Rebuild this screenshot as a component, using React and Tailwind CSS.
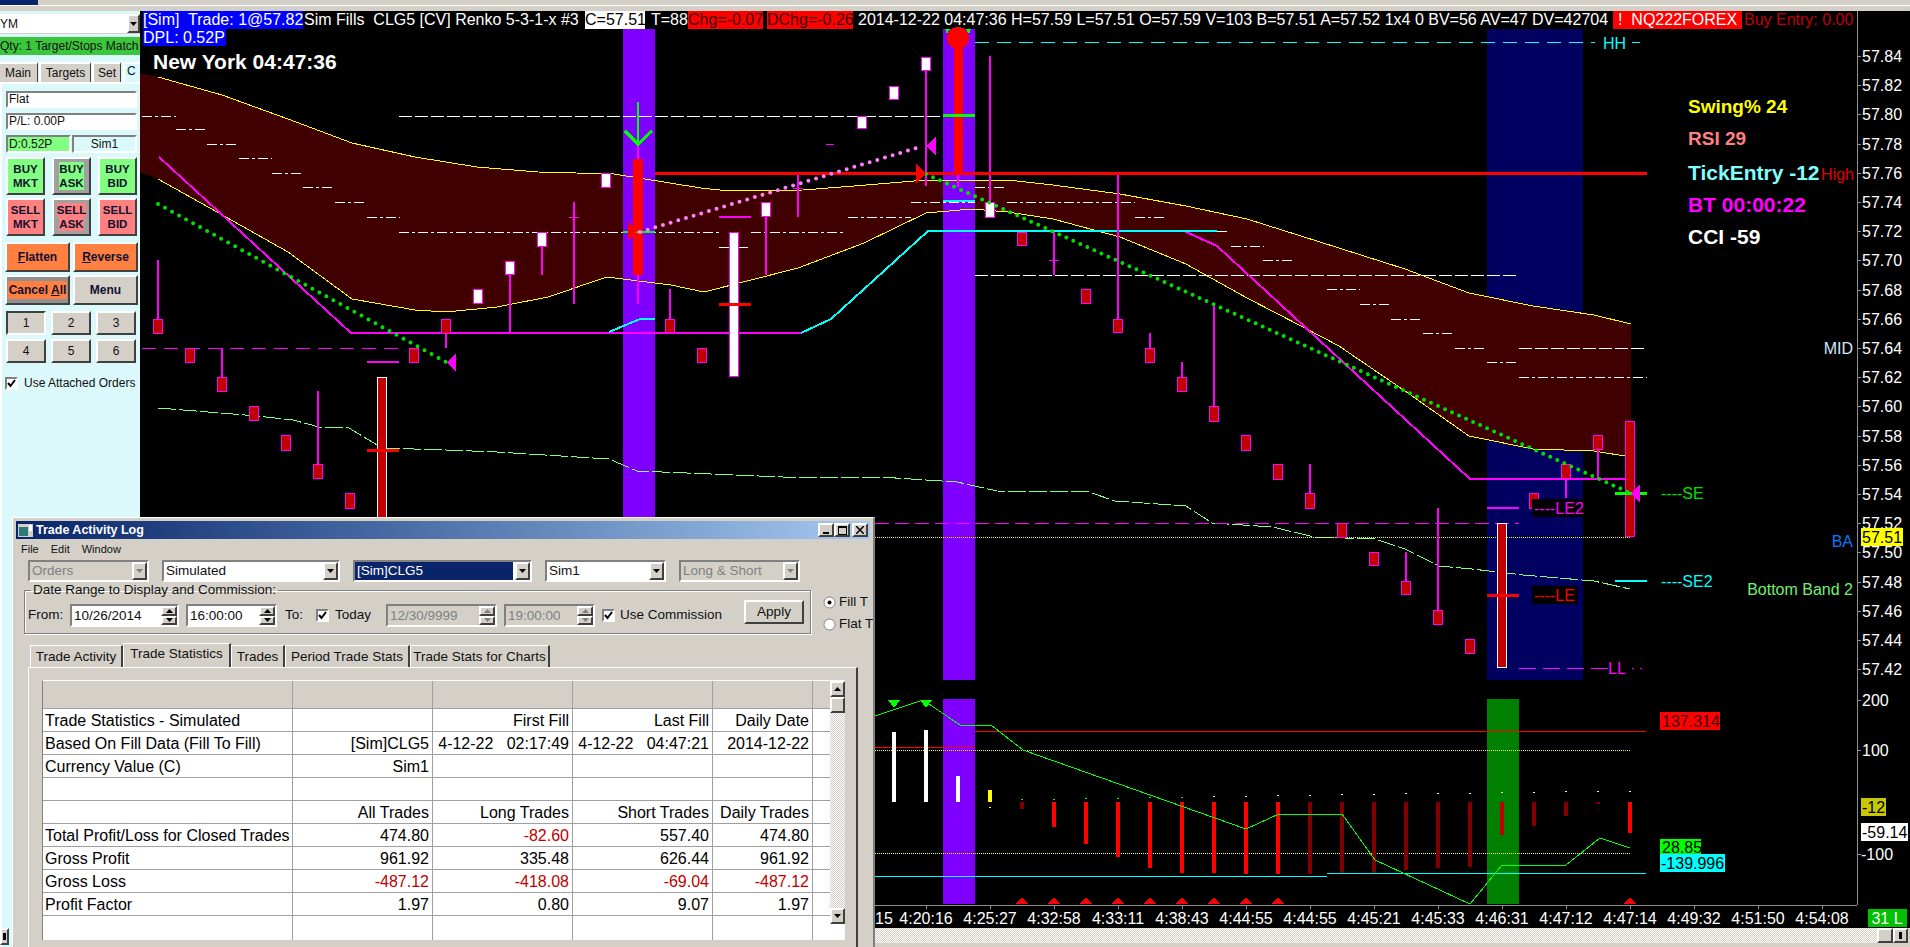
import React from "react";

const raised = "border-2 border-t-white border-l-white border-r-[#404040] border-b-[#404040]";
const sunken = "border-2 border-t-[#808080] border-l-[#808080] border-r-white border-b-white";

const prices = ["57.84","57.82","57.80","57.78","57.76","57.74","57.72","57.70","57.68","57.66","57.64","57.62","57.60","57.58","57.56","57.54","57.52","57.50","57.48","57.46","57.44","57.42"];
const times = ["4:20:16","4:25:27","4:32:58","4:33:11","4:38:43","4:44:55","4:44:55","4:45:21","4:45:33","4:46:31","4:47:12","4:47:14","4:49:32","4:51:50","4:54:08"];

const upper = [[140,73],[158,77],[222,95],[288,119],[352,143],[415,157],[477,167],[538,172],[614,174],[701,188],[729,191],[803,190],[854,186],[926,180],[1008,180],[1053,185],[1120,194],[1186,206],[1247,219],[1339,248],[1405,269],[1469,293],[1533,306],[1594,315],[1631,324]];
const lower = [[140,172],[158,179],[217,212],[288,252],[352,299],[415,310],[446,312],[497,307],[548,297],[607,277],[671,285],[704,292],[798,268],[864,243],[926,213],[972,209],[1008,212],[1053,219],[1120,237],[1186,264],[1247,298],[1303,327],[1339,346],[1405,391],[1469,436],[1533,449],[1594,451],[1631,457]];
const bandGreen = [[158,408],[196,411],[257,416],[293,420],[319,427],[349,428],[382,448],[446,450],[497,452],[609,459],[637,471],[711,474],[783,477],[880,477],[957,482],[997,491],[1089,492],[1115,501],[1186,506],[1212,523],[1273,527],[1314,537],[1375,539],[1405,549],[1439,566],[1472,569],[1523,575],[1594,581],[1630,589]];
const oscLine = [[875,716],[923,700],[960,725],[991,725],[1023,750],[1246,829],[1279,814],[1342,814],[1375,860],[1470,904],[1502,865],[1566,865],[1600,838],[1630,848]];

const pts = (a) => a.map((p) => p.join(",")).join(" ");

// x, top, bottom, wickTop, wickBottom, kind
const candles = [
  [158,319,334,260,334,"r"],[190,348,363,0,0,"r"],[222,377,392,348,377,"r"],[254,406,421,0,0,"r"],
  [286,435,451,0,0,"r"],[318,464,479,391,464,"r"],[350,493,509,0,0,"r"],[382,377,520,0,0,"rw"],
  [414,348,363,0,0,"r"],[446,319,334,334,348,"r"],[478,289,304,0,0,"w"],[510,261,275,275,333,"w"],
  [542,232,247,247,275,"w"],[606,173,188,0,0,"w"],[670,319,333,289,319,"r"],[702,348,363,0,0,"r"],
  [734,232,377,0,0,"w"],[766,202,217,217,275,"w"],[862,116,129,0,0,"w"],[894,86,100,0,0,"w"],
  [926,57,71,71,186,"w"],[990,202,218,56,202,"w"],[1022,232,246,0,0,"r"],[1086,289,304,0,0,"r"],
  [1118,319,333,174,319,"r"],[1150,348,363,333,348,"r"],[1182,377,392,362,377,"r"],[1214,406,422,304,406,"r"],
  [1246,435,451,0,0,"r"],[1278,464,480,0,0,"r"],[1310,493,509,464,493,"r"],[1342,523,538,0,0,"r"],
  [1374,552,566,0,0,"r"],[1406,581,595,552,581,"r"],[1438,610,625,508,610,"r"],[1470,639,654,0,0,"r"],
  [1502,523,668,0,0,"rw"],[1534,493,509,0,0,"r"],[1566,464,479,479,498,"r"],[1598,435,450,450,479,"r"],
  [1630,421,537,0,0,"r"],
];

const dd = "10 3 3 3";
const ld = "13 3";
const whiteSegs = [
  [142,176,116,dd],[176,207,129,dd],[207,239,144,dd],[239,272,158,dd],[272,304,173,dd],[303,335,187,dd],[335,366,202,dd],[367,400,217,dd],
  [399,719,232,dd],[751,844,232,dd],[399,975,116,ld],[719,751,247,dd],[848,911,217,dd],[911,975,202,dd],[1007,1135,202,dd],[975,1007,187,dd],
  [1135,1167,217,dd],[1217,1230,231,dd],[1231,1264,246,dd],[1263,1295,260,dd],[975,1519,275,ld],[1327,1360,289,dd],[1360,1391,304,dd],
  [1391,1423,319,dd],[1423,1455,333,dd],[1455,1487,348,dd],[1487,1519,362,dd],[1519,1647,348,ld],[1519,1647,377,dd],
];

// x, bottom, colour
const oscBars = [
  [1022,809,"#800000"],[1054,827,"#ff0000"],[1086,844,"#ff0000"],[1118,857,"#ff0000"],[1150,868,"#ff0000"],[1182,873,"#ff0000"],[1214,873,"#ff0000"],
  [1246,874,"#ff0000"],[1278,874,"#ff0000"],[1310,874,"#800000"],[1342,873,"#800000"],[1374,873,"#800000"],[1406,870,"#800000"],[1438,868,"#800000"],
  [1470,867,"#800000"],[1502,835,"#c00000"],[1534,826,"#800000"],[1566,816,"#800000"],[1598,804,"#800000"],[1630,833,"#ff0000"],
];

const T = ({ x, y, fill = "#fff", size = 16, bold, anchor, children }) => (
  <text x={x} y={y} fill={fill} fontSize={size} fontWeight={bold ? 700 : 400} textAnchor={anchor} dominantBaseline="central">
    {children}
  </text>
);

const HLine = ({ x1, x2, y, c, w = 1, dash }) => (
  <line x1={x1} x2={x2} y1={y} y2={y} stroke={c} strokeWidth={w} strokeDasharray={dash} />
);

const Chart = () => (
  <svg width="1770" height="917" viewBox="140 11 1770 917" className="block bg-black" shapeRendering="crispEdges">
    {/* session bands */}
    <rect x="1487" y="29" width="96" height="651" fill="#000060" />
    <polygon points={pts([...upper, ...[...lower].reverse()])} fill="#400000" />
    <rect x="623" y="29" width="32" height="500" fill="#8000ff" />
    <rect x="943" y="29" width="32" height="651" fill="#8000ff" />

    <polyline points={pts(upper.slice(1))} fill="none" stroke="#ffff00" strokeWidth="1" />
    <polyline points={pts(lower.slice(1))} fill="none" stroke="#ffff00" strokeWidth="1" />
    <polyline points={pts(bandGreen)} fill="none" stroke="#80ff80" strokeWidth="1" strokeDasharray="18 3" />

    {whiteSegs.map((s, i) => (
      <HLine key={i} x1={s[0]} x2={s[1]} y={s[2]} c="#fff" dash={s[3]} />
    ))}
    <HLine x1={142} x2={400} y={348} c="#ff00ff" dash="14 8" />
    <HLine x1={875} x2={1519} y={523} c="#ff00ff" dash="14 6" />
    <HLine x1={875} x2={1630} y={537} c="#ffff00" dash="1 1" />
    <HLine x1={975} x2={1595} y={42} c="#00ffff" dash="14 8" />
    <HLine x1={1632} x2={1640} y={42} c="#00ffff" />

    {/* trail lines */}
    <polyline points="159,157 351,333 801,333" fill="none" stroke="#ff00ff" strokeWidth="2" />
    <polyline points="1184,231 1217,246 1470,479 1632,479" fill="none" stroke="#ff00ff" strokeWidth="2" />
    <polyline points="609,332 640,319 655,319" fill="none" stroke="#00ffff" strokeWidth="2" />
    <polyline points="801,333 831,319 928,231 1217,231" fill="none" stroke="#00ffff" strokeWidth="2" />
    <HLine x1={943} x2={975} y={201} c="#00ffff" w={2} />

    {/* candles */}
    {candles.map(([x, t, b, wt, wb, k], i) => (
      <g key={i}>
        {wb > 0 && <rect x={x - 1} y={wt} width="2" height={wb - wt} fill="#ff00ff" />}
        <rect x={x - 4.5} y={t + 0.5} width="9" height={b - t - 1} fill={k === "w" ? "#fff" : "#c00000"} stroke={k === "rw" ? "#fff" : "#ff00ff"} strokeWidth="1" />
      </g>
    ))}
    <rect x="573" y="202" width="2" height="102" fill="#ff00ff" />
    <rect x="569" y="217" width="10" height="1" fill="#ff00ff" />
    <rect x="797" y="175" width="2" height="42" fill="#ff00ff" />
    <rect x="793" y="188" width="10" height="1" fill="#ff00ff" />
    <rect x="1053" y="232" width="2" height="43" fill="#ff00ff" />
    <rect x="1049" y="260" width="10" height="1" fill="#ff00ff" />
    <rect x="826" y="144" width="8" height="1" fill="#ff00ff" />

    {/* signal bars */}
    <rect x="637" y="144" width="2" height="160" fill="#ff00ff" />
    <rect x="633" y="159" width="10" height="116" fill="#ff0000" />
    <rect x="957" y="173" width="2" height="14" fill="#ff00ff" />
    <rect x="954" y="40" width="9" height="133" fill="#ff0000" />
    <circle cx="958" cy="38" r="11" fill="#ff0000" />
    <polygon points="945,29 950,29 947,34" fill="#00ff00" />
    <polygon points="966,29 971,29 969,34" fill="#00ff00" />
    <HLine x1={943} x2={975} y={115} c="#00ff00" w={3} />
    <HLine x1={623} x2={655} y={232} c="#00ff00" w={2} />
    <polyline points="638,102 638,144" fill="none" stroke="#00ff00" strokeWidth="2" />
    <polyline points="625,131 638,144 652,131" fill="none" stroke="#00ff00" strokeWidth="3" />

    <HLine x1={367} x2={399} y={362} c="#ff00ff" w={2} />
    <HLine x1={719} x2={751} y={217} c="#ff00ff" w={2} />
    <HLine x1={367} x2={399} y={450} c="#ff0000" w={3} />
    <HLine x1={719} x2={751} y={304} c="#ff0000" w={3} />
    <HLine x1={1487} x2={1519} y={508} c="#ff00ff" w={2} />
    <HLine x1={1487} x2={1519} y={595} c="#ff0000" w={3} />
    <HLine x1={655} x2={1647} y={173} c="#ff0000" w={3} />
    <HLine x1={1615} x2={1647} y={493} c="#00ff00" w={3} />
    <HLine x1={1615} x2={1647} y={581} c="#00ffff" w={2} />
    <HLine x1={1519} x2={1608} y={668} c="#ff00ff" dash="17 7" />
    <HLine x1={1632} x2={1647} y={668} c="#ff00ff" dash="2 6" />

    {/* dotted trend lines */}
    <g shapeRendering="auto">
      <line x1="158" y1="204" x2="446" y2="362" stroke="#00e000" strokeWidth="4" strokeLinecap="round" strokeDasharray="0 8" />
      <line x1="926" y1="174" x2="1630" y2="493" stroke="#00e000" strokeWidth="4" strokeLinecap="round" strokeDasharray="0 7.7" />
      <line x1="640" y1="232" x2="923" y2="146" stroke="#ff80ff" strokeWidth="4" strokeLinecap="round" strokeDasharray="0 8" />
    </g>
    <polygon points="447,362 456,353 456,372" fill="#ff00ff" />
    <polygon points="926,146 936,137 936,155" fill="#ff00ff" />
    <polygon points="1631,493 1640,484 1640,503" fill="#ff00ff" />
    <polygon points="628,222 628,240 638,231" fill="#ff0000" />
    <polygon points="916,164 916,183 926,173" fill="#ff0000" />

    {/* chart labels */}
    <T x={153} y={61} size={21} bold>New York 04:47:36</T>
    <T x={1603} y={43} fill="#00ffff">HH</T>
    <T x={1661} y={493} fill="#00e000">----SE</T>
    <T x={1661} y={581} fill="#00ffff">----SE2</T>
    <rect x="1532" y="499" width="51" height="18" fill="#000" />
    <T x={1534} y={508} fill="#ff00ff">----LE2</T>
    <rect x="1532" y="586" width="46" height="18" fill="#000" />
    <T x={1534} y={595} fill="#ff0000">----LE</T>
    <T x={1608} y={668} fill="#ff00ff">LL</T>

    <T x={1688} y={106} size={19} bold fill="#ffff00">Swing% 24</T>
    <T x={1688} y={138} size={19} bold fill="#ff8080">RSI 29</T>
    <T x={1688} y={172} size={21} bold fill="#80ffff">TickEntry -12</T>
    <T x={1688} y={204} size={21} bold fill="#ff00ff">BT 00:00:22</T>
    <T x={1688} y={236} size={21} bold>CCI -59</T>
    <T x={1854} y={174} fill="#e00000" anchor="end">High</T>
    <T x={1853} y={348} fill="#d0e8ff" anchor="end">MID</T>
    <T x={1853} y={541} fill="#0a78f0" anchor="end">BA</T>
    <T x={1853} y={589} fill="#70f070" anchor="end">Bottom Band 2</T>

    {/* price axis */}
    <line x1="1857" x2="1857" y1="11" y2="905" stroke="#909090" strokeWidth="1" />
    {prices.map((p, i) => {
      const y = Math.round(56 + i * 29.2);
      return (
        <g key={p}>
          <HLine x1={1857} x2={1861} y={y} c="#909090" />
          <T x={1862} y={y}>{p}</T>
        </g>
      );
    })}
    <rect x="1861" y="528" width="42" height="18" fill="#ffff00" />
    <T x={1862} y={537} fill="#000">57.51</T>

    {/* oscillator panel */}
    <rect x="943" y="699" width="32" height="205" fill="#8000ff" />
    <rect x="1487" y="699" width="32" height="205" fill="#008000" />
    <HLine x1={975} x2={1646} y={731} c="#ff0000" />
    <HLine x1={875} x2={975} y={747} c="#ff0000" />
    <HLine x1={875} x2={1631} y={750} c="#ffff00" dash="1 1" />
    <HLine x1={875} x2={1631} y={853} c="#ffff00" dash="1 1" />
    <HLine x1={875} x2={1327} y={876} c="#00ffff" />
    <HLine x1={1327} x2={1646} y={873} c="#00ffff" />
    <rect x="892" y="732" width="4" height="70" fill="#fff" />
    <rect x="924" y="730" width="4" height="72" fill="#fff" />
    <rect x="956" y="776" width="4" height="26" fill="#fff" />
    <rect x="988" y="790" width="4" height="12" fill="#ffff00" />
    <rect x="989" y="807" width="2" height="1" fill="#ffff00" />
    {oscBars.map(([x, b, c]) => (
      <rect key={x} x={x - 2} y="802" width="4" height={b - 802} fill={c} />
    ))}
    {oscBars.map(([x], i) => (
      <rect key={x} x={x - 1} y={799 - Math.min(i, 8) * 0.5 - (i > 8 ? i - 8 : 0) * 0.4} width="2" height="1" fill={i < 6 ? "#00ff00" : "#ffff80"} />
    ))}
    <polyline points={pts(oscLine)} fill="none" stroke="#00ff00" strokeWidth="1" />
    <polygon points="888,700 900,700 894,708" fill="#00ff00" />
    <polygon points="920,700 932,700 926,708" fill="#00ff00" />
    {[1022,1054,1086,1118,1150,1182,1214,1246,1278,1630].map((x) => (
      <polygon key={x} points={`${x - 6},904 ${x + 6},904 ${x},897`} fill="#ff0000" />
    ))}
    <rect x="1660" y="712" width="60" height="18" fill="#ff0000" />
    <T x={1662} y={721} fill="#400000">137.314</T>
    <rect x="1660" y="839" width="41" height="15" fill="#00ff00" />
    <T x={1662} y={847} fill="#000">28.85</T>
    <rect x="1660" y="854" width="65" height="18" fill="#00ffff" />
    <T x={1661} y={863} fill="#000">-139.996</T>

    <HLine x1={1857} x2={1861} y={700} c="#909090" />
    <T x={1862} y={700}>200</T>
    <HLine x1={1857} x2={1861} y={750} c="#909090" />
    <T x={1862} y={750}>100</T>
    <HLine x1={1857} x2={1861} y={854} c="#909090" />
    <T x={1861} y={854}>-100</T>
    <rect x="1861" y="798" width="25" height="18" fill="#c8c800" />
    <T x={1862} y={807} fill="#000">-12</T>
    <rect x="1861" y="823" width="47" height="18" fill="#fff" />
    <T x={1862} y={832} fill="#000">-59.14</T>

    {/* time axis */}
    <HLine x1={140} x2={1857} y={905} c="#909090" />
    <T x={875} y={918}>15</T>
    {times.map((t, i) => (
      <g key={i}>
        <line x1={926 + i * 64} x2={926 + i * 64} y1="905" y2="909" stroke="#909090" />
        <T x={926 + i * 64} y={918} anchor="middle">{t}</T>
      </g>
    ))}
    <rect x="1868" y="909" width="39" height="18" fill="#00c000" />
    <T x={1887} y={918} anchor="middle">31 L</T>
  </svg>
);

const Arrow = ({ up, grey }) => (
  <svg width="7" height="4" viewBox="0 0 7 4" className="block">
    <polygon points={up ? "0,4 7,4 3.5,0" : "0,0 7,0 3.5,4"} fill={grey ? "#808080" : "#000"} />
  </svg>
);

const Combo = ({ label, w, selected, disabled }) => (
  <div className={`flex h-[22px] shrink-0 items-stretch ${sunken} ${w} ${disabled ? "bg-[#d4d0c8] text-[#808080]" : "bg-white"}`}>
    <div className={`mr-[2px] flex-1 truncate pl-[2px] leading-[18px] ${selected ? "bg-[#0a246a] text-white" : ""}`}>{label}</div>
    <div className={`flex w-[15px] items-center justify-center bg-[#d4d0c8] ${raised}`}>
      <Arrow grey={disabled} />
    </div>
  </div>
);

const Spin = ({ label, w, disabled }) => (
  <div className={`flex h-[23px] shrink-0 items-stretch ${sunken} ${w} ${disabled ? "bg-[#d4d0c8] text-[#808080]" : "bg-white"}`}>
    <div className="flex-1 pl-[2px] leading-[19px]">{label}</div>
    <div className="flex w-[16px] flex-col">
      <div className={`flex flex-1 items-center justify-center bg-[#d4d0c8] ${raised}`}><Arrow up grey={disabled} /></div>
      <div className={`flex flex-1 items-center justify-center bg-[#d4d0c8] ${raised}`}><Arrow grey={disabled} /></div>
    </div>
  </div>
);

const Check = ({ mr }) => (
  <div className={`flex h-[13px] w-[13px] shrink-0 items-center justify-center bg-white ${sunken} ${mr || ""}`}>
    <svg width="9" height="9" viewBox="0 0 9 9" className="block">
      <path d="M1 4 L3.5 7 L8 1" fill="none" stroke="#000" strokeWidth="2" />
    </svg>
  </div>
);

const Radio = ({ on }) => (
  <svg width="13" height="13" viewBox="0 0 13 13" className="block shrink-0">
    <circle cx="6.5" cy="6.5" r="5.5" fill="#fff" stroke="#808080" />
    {on && <circle cx="6.5" cy="6.5" r="2" fill="#000" />}
  </svg>
);

const TradeButton = ({ top, bottom, tint, aside }) => (
  <div className={`flex h-[38px] w-[39px] flex-col items-center justify-center text-[11.5px] leading-[14px] font-bold text-[#101030] ${raised} ${aside ? "bg-[#a0a0a0]" : tint}`}>
    <span className={aside ? tint : ""}>{top}</span>
    <span className={aside ? tint : ""}>{bottom}</span>
  </div>
);

const Big = ({ children, face }) => (
  <div className={`flex h-[30px] w-[65px] items-center justify-center text-[12px] font-bold text-[#101030] ${raised} ${face}`}>
    {children}
  </div>
);

const Num = ({ n, pressed }) => (
  <div className={`flex h-[24px] w-[40px] items-center justify-center bg-[#d4d0c8] text-[12px] ${pressed ? "border-2 border-t-[#404040] border-l-[#404040] border-r-white border-b-white" : raised}`}>
    {n}
  </div>
);

const LeftPanel = () => (
  <aside className="flex w-[140px] shrink-0 flex-col bg-[#dbf9fb] text-[12px] text-[#101010]">
    <div className="mt-[3px] flex h-[20px] items-stretch border-b border-[#d4d0c8] bg-white">
      <div className="flex-1 leading-[20px]">YM</div>
      <div className={`flex w-[13px] items-center justify-center bg-[#d4d0c8] ${raised}`}><Arrow /></div>
    </div>
    <div className="mt-[3px] h-[18px] overflow-hidden bg-[#3cc63c] leading-[18px] whitespace-nowrap">Qty: 1 Target/Stops Match</div>
    <div className="mt-[7px] flex h-[20px]">
      <div className={`w-[38px] bg-[#d4d0c8] pl-[5px] leading-[19px] ${raised} border-b-0 border-l-0 border-r-[1px]`}>Main</div>
      <div className={`ml-[1px] w-[52px] bg-[#d4d0c8] text-center leading-[19px] ${raised} border-b-0 border-r-[1px]`}>Targets</div>
      <div className={`ml-[1px] w-[29px] bg-[#d4d0c8] text-center leading-[19px] ${raised} border-b-0 border-r-[1px]`}>Set</div>
      <div className="ml-[2px] flex-1 border-t-2 border-l-2 border-white pl-[2px] leading-[15px]">C</div>
    </div>
    <div className="flex flex-1 flex-col border-t-2 border-l-2 border-white pl-[4px]">
      <div className={`mt-[7px] h-[17px] w-[131px] bg-white pl-[1px] leading-[13px] ${sunken}`}>Flat</div>
      <div className={`mt-[5px] h-[17px] w-[131px] bg-white pl-[1px] leading-[13px] ${sunken}`}>P/L: 0.00P</div>
      <div className="mt-[5px] flex h-[18px] gap-[1px]">
        <div className={`w-[65px] bg-[#80ff80] pl-[1px] leading-[14px] ${sunken}`}>D:0.52P</div>
        <div className={`w-[65px] text-center leading-[14px] ${sunken}`}>Sim1</div>
      </div>
      <div className="mt-[4px] flex gap-[7px]">
        <TradeButton top="BUY" bottom="MKT" tint="bg-[#80ff80]" />
        <TradeButton top="BUY" bottom="ASK" tint="bg-[#80ff80]" aside />
        <TradeButton top="BUY" bottom="BID" tint="bg-[#80ff80]" />
      </div>
      <div className="mt-[3px] flex gap-[7px]">
        <TradeButton top="SELL" bottom="MKT" tint="bg-[#ff8080]" />
        <TradeButton top="SELL" bottom="ASK" tint="bg-[#ff8080]" aside />
        <TradeButton top="SELL" bottom="BID" tint="bg-[#ff8080]" />
      </div>
      <div className="mt-[6px] -ml-[1px] flex gap-[3px]">
        <Big face="bg-[#ff8040]"><span><u>F</u>latten</span></Big>
        <Big face="bg-[#ff8040]"><span><u>R</u>everse</span></Big>
      </div>
      <div className="mt-[3px] -ml-[1px] flex gap-[3px]">
        <Big face="bg-[#909090]"><span className="bg-[#ff8040] px-[1px]">Cancel <u>A</u>ll</span></Big>
        <Big face="bg-[#d4d0c8]">Menu</Big>
      </div>
      <div className="mt-[6px] flex gap-[5px]">
        <Num n="1" pressed /><Num n="2" /><Num n="3" />
      </div>
      <div className="mt-[4px] flex gap-[5px]">
        <Num n="4" /><Num n="5" /><Num n="6" />
      </div>
      <div className="mt-[11px] -ml-[1px] flex items-center gap-[6px]">
        <Check />
        <span>Use Attached Orders</span>
      </div>
      <div className="mt-auto mb-[2px] -ml-[6px] flex h-[17px] items-center">
        <div className={`flex h-[17px] w-[9px] items-center justify-center bg-[#d4d0c8] ${raised}`}>
          <div className="h-[7px] w-[3px] bg-black" />
        </div>
      </div>
    </div>
  </aside>
);

const rows = [
  ["Trade Statistics - Simulated", "", "First Fill", "Last Fill", "Daily Date"],
  ["Based On Fill Data (Fill To Fill)", "[Sim]CLG5", "4-12-22   02:17:49", "4-12-22   04:47:21", "2014-12-22"],
  ["Currency Value (C)", "Sim1", "", "", ""],
  ["", "", "", "", ""],
  ["", "All Trades", "Long Trades", "Short Trades", "Daily Trades"],
  ["Total Profit/Loss for Closed Trades", "474.80", "-82.60", "557.40", "474.80"],
  ["Gross Profit", "961.92", "335.48", "626.44", "961.92"],
  ["Gross Loss", "-487.12", "-418.08", "-69.04", "-487.12"],
  ["Profit Factor", "1.97", "0.80", "9.07", "1.97"],
  ["", "", "", "", ""],
];

const colsClass = "grid grid-cols-[250px_140px_140px_140px_100px_17px]";

const StatsGrid = () => (
  <div className="flex h-[260px] w-[803px] border-t border-l border-t-white border-l-[#808080] bg-white">
    <div className="w-[787px] text-[16px] text-black">
      <div className={`${colsClass} h-[28px] border-b border-[#a0a0a0] bg-[#d4d0c8]`}>
        {[0, 1, 2, 3, 4].map((c) => (
          <div key={c} className="border-r border-[#a0a0a0]" />
        ))}
        <div />
      </div>
      {rows.map((r, i) => (
        <div key={i} className={`${colsClass} ${i === 9 ? "h-[24px]" : "h-[23px] border-b border-[#a0a0a0]"}`}>
          {r.map((cell, c) => (
            <div
              key={c}
              className={`flex items-center overflow-hidden border-r border-[#a0a0a0] pt-[1px] whitespace-pre ${c === 0 ? "pl-[2px]" : "justify-end pr-[3px]"} ${cell.startsWith("-") ? "text-[#c00000]" : ""}`}
            >
              {cell}
            </div>
          ))}
          <div />
        </div>
      ))}
    </div>
    <div className="flex w-[16px] flex-col">
      <div className="flex h-[243px] flex-col bg-[repeating-conic-gradient(#d4d0c8_0_25%,#fff_0_50%)] bg-[length:2px_2px]">
        <div className={`flex h-[16px] items-center justify-center bg-[#d4d0c8] ${raised}`}><Arrow up /></div>
        <div className={`h-[16px] bg-[#d4d0c8] ${raised}`} />
        <div className={`mt-auto flex h-[16px] items-center justify-center bg-[#d4d0c8] ${raised}`}><Arrow /></div>
      </div>
    </div>
  </div>
);

const WinButton = ({ children }) => (
  <div className={`flex h-[14px] w-[16px] items-center justify-center bg-[#d4d0c8] ${raised}`}>{children}</div>
);

const TradeWindow = () => (
  <section className="absolute top-[517px] left-[12px] flex h-[430px] w-[863px] flex-col overflow-hidden border-t border-l border-t-white border-l-white border-r-2 border-r-[#808080] bg-[#d4d0c8] px-[3px] pt-[3px] text-[13.5px] text-[#101010]">
    <div className="flex h-[18px] shrink-0 items-center bg-linear-to-r from-[#0a246a] to-[#a6caf0] pr-[2px] pl-[2px]">
      <svg width="15" height="13" viewBox="0 0 15 13" className="mr-[3px] block shrink-0">
        <rect x="0" y="0" width="15" height="13" fill="#d4d0c8" />
        <rect x="1" y="3" width="9" height="9" fill="#2a7a7a" />
        <rect x="11" y="1" width="3" height="6" fill="#fff" />
      </svg>
      <span className="flex-1 text-[12.5px] font-bold text-white">Trade Activity Log</span>
      <WinButton><div className="mt-[5px] h-[2px] w-[6px] bg-black" /></WinButton>
      <WinButton><div className="h-[9px] w-[9px] border border-t-2 border-black" /></WinButton>
      <div className="ml-[2px]">
        <WinButton>
          <svg width="8" height="8" viewBox="0 0 8 8" className="block"><path d="M0 0 L8 8 M8 0 L0 8" stroke="#000" strokeWidth="1.5" /></svg>
        </WinButton>
      </div>
    </div>
    <div className="flex h-[20px] shrink-0 items-center gap-[12px] pl-[5px] text-[11px]">
      <span>File</span><span>Edit</span><span>Window</span>
    </div>
    <div className="mt-[1px] ml-[12px] flex shrink-0 gap-[13px]">
      <Combo label="Orders" w="w-[121px]" disabled />
      <Combo label="Simulated" w="w-[178px]" />
      <Combo label="[Sim]CLG5" w="w-[179px]" selected />
      <Combo label="Sim1" w="w-[121px]" />
      <Combo label="Long & Short" w="w-[121px]" disabled />
    </div>
    <div className="flex h-[52px] shrink-0">
      <fieldset className="ml-[8px] h-[52px] w-[787px] shrink-0 border border-[#808080] shadow-[inset_1px_1px_0_#fff,1px_1px_0_#fff]">
        <legend className="ml-[6px] px-[2px] leading-[16px]">Date Range to Display and Commission:</legend>
        <div className="mt-[6px] flex items-center">
          <span className="ml-[3px] w-[42px]">From:</span>
          <Spin label="10/26/2014" w="w-[109px]" />
          <div className="ml-[7px]"><Spin label="16:00:00" w="w-[91px]" /></div>
          <span className="ml-[8px] w-[31px]">To:</span>
          <Check />
          <span className="ml-[6px] w-[51px]">Today</span>
          <Spin label="12/30/9999" w="w-[111px]" disabled />
          <div className="ml-[7px]"><Spin label="19:00:00" w="w-[91px]" disabled /></div>
          <div className="ml-[7px]"><Check /></div>
          <span className="ml-[5px] w-[124px]">Use Commission</span>
          <div className={`-mt-[7px] flex h-[24px] w-[60px] items-center justify-center ${raised}`}>Apply</div>
        </div>
      </fieldset>
      <div className="mt-[12px] ml-[12px] flex w-[48px] flex-col gap-[6px] leading-[16px] whitespace-nowrap">
        <div className="flex items-center gap-[3px]"><Radio on /><span>Fill T</span></div>
        <div className="flex items-center gap-[3px]"><Radio /><span>Flat T</span></div>
      </div>
    </div>
    <div className="mt-[9px] ml-[14px] flex h-[24px] shrink-0 items-end">
      {[["Trade Activity", "w-[93px]"], ["Trade Statistics", "w-[108px]", true], ["Trades", "w-[54px]"], ["Period Trade Stats", "w-[125px]"], ["Trade Stats for Charts", "w-[140px]"]].map(([t, w, on]) => (
        <div
          key={t}
          className={`${w} border-t border-l border-t-white border-l-white border-r-2 border-r-[#404040] text-center ${on ? "h-[24px] leading-[20px]" : "h-[22px] leading-[21px]"}`}
        >
          {t}
        </div>
      ))}
    </div>
    <div className="ml-[12px] h-[280px] w-[830px] shrink-0 border-t border-l border-t-white border-l-white border-r-2 border-r-[#404040] pt-[12px] pl-[13px]">
      <StatsGrid />
    </div>
  </section>
);

const headerCell = "shrink-0 whitespace-pre";

export default function App() {
  return (
    <div className="relative flex h-[947px] w-[1910px] flex-col overflow-hidden bg-[#d4d0c8] font-['Liberation_Sans',Arial,sans-serif]">
      <div className="h-[5px] shrink-0"><div className="h-[5px] w-[38px] bg-[#0a246a]" /></div>
      <div className="h-[1px] shrink-0 bg-white" />
      <div className="h-[5px] shrink-0" />
      <div className="flex min-h-0 flex-1">
        <LeftPanel />
        <main className="relative flex flex-1 flex-col bg-black">
          <Chart />
          <div className="flex h-[15px] shrink-0">
            <div className="flex-1 bg-[repeating-conic-gradient(#d4d0c8_0_25%,#fff_0_50%)] bg-[length:2px_2px]" />
            <div className={`h-[15px] w-[16px] bg-[#d4d0c8] ${raised}`} />
            <div className={`flex h-[15px] w-[15px] items-center justify-center bg-[#d4d0c8] ${raised}`}>
              <div className="h-[7px] w-[3px] bg-black" />
            </div>
            <div className="w-[2px] bg-[#d4d0c8]" />
          </div>
          <div className="h-[4px] shrink-0 bg-[#d4d0c8]" />

          {/* status text over the chart */}
          <div className="absolute top-0 left-[3px] flex h-[18px] text-[16px] leading-[18px] text-white">
            <span className={`${headerCell} w-[160px] bg-[#0000ff]`}>[Sim]  Trade: 1@57.82</span>
            <span className={`${headerCell} ml-[1px] w-[281px]`}>Sim Fills  CLG5 [CV] Renko 5-3-1-x #3</span>
            <span className={`${headerCell} w-[60px] bg-white text-center text-black`}>C=57.51</span>
            <span className={`${headerCell} ml-[6px] w-[37px]`}>T=88</span>
            <span className={`${headerCell} w-[75px] bg-[#ff0000] text-[#400000]`}>Chg=-0.07</span>
            <span className={`${headerCell} ml-[4px] w-[86px] bg-[#ff0000] text-[#400000]`}>DChg=-0.26</span>
            <span className={`${headerCell} ml-[5px] w-[755px]`}>2014-12-22 04:47:36 H=57.59 L=57.51 O=57.59 V=103 B=57.51 A=57.52 1x4 0 BV=56 AV=47 DV=42704</span>
            <span className={`${headerCell} w-[129px] bg-[#ff0000] pl-[5px]`}>!  NQ222FOREX</span>
            <span className={`${headerCell} ml-[2px] text-[#c00000]`}>Buy Entry: 0.00</span>
          </div>
          <div className="absolute top-[18px] left-[3px] h-[17px] w-[83px] bg-[#0000ff] text-[16px] leading-[17px] whitespace-pre text-white">DPL: 0.52P</div>
        </main>
      </div>
      <TradeWindow />
    </div>
  );
}
